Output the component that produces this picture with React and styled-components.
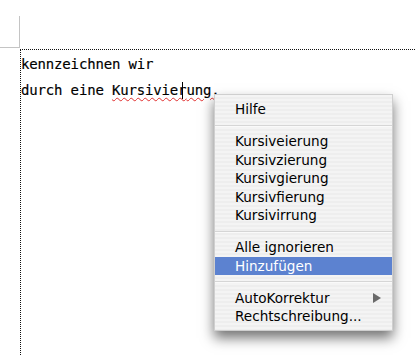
import React from "react";
import styled, { createGlobalStyle } from "styled-components";

const Global = createGlobalStyle`
  html, body { margin: 0; padding: 0; background: #fff; }
  body { width: 415px; height: 355px; overflow: hidden; }
`;

const Page = styled.div`
  position: relative;
  width: 415px;
  height: 355px;
  background: #fff;
  overflow: hidden;
`;

const RulerCorner = styled.div`
  margin-top: 16px;
  width: 19px;
  height: 31px;
  border-right: 1px solid #c4c4c4;
  border-bottom: 1px solid #c4c4c4;
`;

const TextFrame = styled.div`
  margin-top: 1px;
  margin-left: 20px;
  height: 320px;
  border-top: 1px dotted #111;
  border-left: 1px dotted #111;
  padding-top: 1px;
  font-family: "DejaVu Sans Mono", monospace;
  font-size: 14px;
  letter-spacing: -0.16px;
  line-height: 26px;
  color: #000;
  -webkit-text-stroke: 0.15px #000;
`;

const Line = styled.div`
  white-space: pre;
`;

const Misspelled = styled.span`
  text-decoration: underline wavy #e03030;
  text-decoration-thickness: 1px;
  text-underline-offset: 2px;
`;

const Caret = styled.span`
  display: inline-block;
  width: 0;
  height: 17px;
  border-left: 1px solid #000;
  margin-left: -4px;
  margin-right: 3px;
  vertical-align: -4px;
`;

const Menu = styled.div`
  position: absolute;
  left: 214px;
  top: 94px;
  width: 177px;
  padding: 5px 0 4px;
  border: 1px solid #cfcfcf;
  background: repeating-linear-gradient(
    to bottom,
    #f4f4f4 0px,
    #f4f4f4 2px,
    #eeeeee 2px,
    #eeeeee 4px
  );
  box-shadow: 0 7px 12px rgba(0, 0, 0, 0.55);
  font-family: "DejaVu Sans", sans-serif;
  font-size: 13.6px;
  color: #000;
`;

const Item = styled.div`
  display: flex;
  align-items: center;
  justify-content: space-between;
  height: 18.5px;
  padding: 0 11px 0 20px;
  background: ${(p) => (p.$active ? "#5c82d0" : "transparent")};
  color: ${(p) => (p.$active ? "#fff" : "#000")};
`;

const Separator = styled.div`
  height: 13.5px;
  display: flex;
  align-items: center;
  &::after {
    content: "";
    display: block;
    width: 100%;
    height: 1px;
    background: #d6d6d6;
    box-shadow: 0 1px 0 #fafafa;
  }
`;

const Arrow = styled.span`
  width: 0;
  height: 0;
  border-top: 5px solid transparent;
  border-bottom: 5px solid transparent;
  border-left: 8px solid #6a6a6a;
`;

export default function App() {
  return (
    <Page>
      <Global />
      <RulerCorner />
      <TextFrame>
        <Line>kennzeichnen wir</Line>
        <Line>
          durch eine <Misspelled>Kursivier<Caret />ung.</Misspelled>
        </Line>
      </TextFrame>
      <Menu>
        <Item>Hilfe</Item>
        <Separator />
        <Item>Kursiveierung</Item>
        <Item>Kursivzierung</Item>
        <Item>Kursivgierung</Item>
        <Item>Kursivfierung</Item>
        <Item>Kursivirrung</Item>
        <Separator />
        <Item>Alle ignorieren</Item>
        <Item $active>Hinzufügen</Item>
        <Separator />
        <Item>
          AutoKorrektur
          <Arrow />
        </Item>
        <Item>Rechtschreibung...</Item>
      </Menu>
    </Page>
  );
}
